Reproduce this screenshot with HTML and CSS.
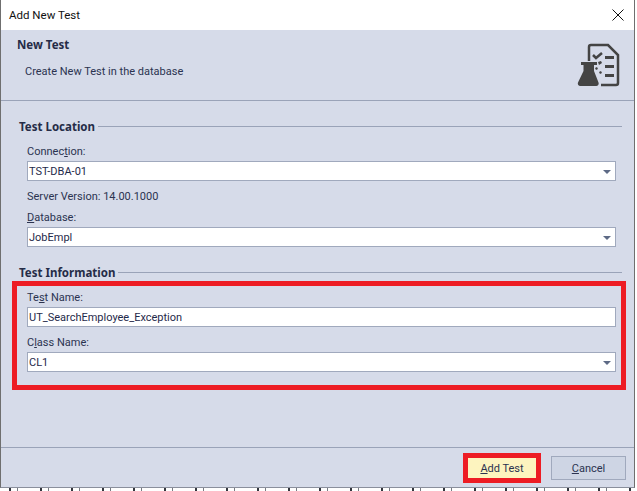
FILE: index.html
```html
<!DOCTYPE html>
<html lang="en">
<head>
<meta charset="utf-8">
<title>Add New Test</title>
<link rel="stylesheet" href="styles.css">
</head>
<body>
<div class="dialog">
  <div class="titlebar">
    <span class="title">Add New Test</span>
    <svg class="close" width="12" height="12" viewBox="0 0 12 12"><path d="M.5.5l11 11M11.500.5l-11 11" stroke="#111" stroke-width="1" fill="none"/></svg>
  </div>
  <div class="banner">
    <div class="banner-text">
      <div class="banner-title">New Test</div>
      <div class="banner-sub">Create New Test in the database</div>
    </div>
    <svg class="banner-icon" width="44" height="44" viewBox="0 0 44 44">
      <path d="M13 18V4a2 2 0 0 1 2-2h17l10 10v28a2 2 0 0 1-2 2H25" fill="none" stroke="#444" stroke-width="2.500"/>
      <path d="M17 12l3 3 6-5" fill="none" stroke="#444" stroke-width="2.500"/>
      <path d="M29 13h9v3h-9zM29 22h9v3h-9zM29 31h9v3h-9z" fill="#444"/>
      <path d="M22 19l3-1 1 2-3 2zM19 25l2-1 1 2-2 1zM23 29l2-1 1 2-2 1z" fill="#444"/>
      <path d="M5 19h16v3h-3v6l4.500 11.500a2.500 2.500 0 0 1-2.500 3.500H4.500a2.500 2.500 0 0 1-2.500-3.500L7.500 28v-6H5z" fill="#444"/>
    </svg>
  </div>
  <div class="content">
    <div class="group-head"><span class="group-title">Test Location</span><span class="rule"></span></div>
    <div class="fields">
      <label class="label">Connec<u>t</u>ion:</label>
      <div class="field"><span>TST-DBA-01</span><i class="arrow"></i></div>
      <div class="label version">Server Version: 14.00.1000</div>
      <label class="label db"><u>D</u>atabase:</label>
      <div class="field"><span>JobEmpl</span><i class="arrow"></i></div>
    </div>
    <div class="group-head second"><span class="group-title">Test Information</span><span class="rule"></span></div>
    <div class="callout">
      <label class="label">Te<u>s</u>t Name:</label>
      <div class="field"><span>UT_SearchEmployee_Exception</span></div>
      <label class="label cls">C<u>l</u>ass Name:</label>
      <div class="field"><span>CL1</span><i class="arrow"></i></div>
    </div>
  </div>
  <div class="footer">
    <div class="button-mark"><button class="btn primary"><u>A</u>dd Test</button></div>
    <button class="btn"><u>C</u>ancel</button>
  </div>
</div>
<div class="desk"></div>
</body>
</html>
```
FILE: styles.css
```css
* { box-sizing: border-box; }
html, body { margin: 0; padding: 0; }
body {
  width: 637px;
  height: 491px;
  overflow: hidden;
  background: #fff;
  font-family: Roboto, "Open Sans", sans-serif;
  font-size: 11px;
  color: #2b3350;
}
.dialog {
  width: 635px;
  height: 488px;
  border-left: 1px solid #6f6f6f;
  border-right: 1px solid #6f6f6f;
  border-bottom: 1px solid #8a8f9c;
  background: #d6dbe9;
  display: flex;
  flex-direction: column;
}
.desk {
  width: 635px;
  height: 3px;
  background: repeating-linear-gradient(90deg, #fff 0 9px, #33363e 9px 11px, #fff 11px 17px, #777a82 17px 18px, #fff 18px 31px);
}
.titlebar {
  height: 30px;
  flex: none;
  background: #fff;
  display: flex;
  align-items: center;
  justify-content: space-between;
  padding: 0 8px 0 8px;
}
.title { font-size: 11.500px; color: #111; }
.close { margin-right: 2px; }
.banner {
  height: 71px;
  flex: none;
  border-bottom: 1px solid #9aa3b8;
  display: flex;
  justify-content: space-between;
  padding: 7px 14px 0 16px;
}
.banner-title, .group-title {
  font-family: "Noto Sans", sans-serif;
  font-size: 11.500px;
  font-weight: 700;
  color: #252c47;
}
.banner-title { line-height: 16px; }
.banner-sub { margin: 11px 0 0 8px; line-height: 16px; }
.banner-icon { margin-top: 6px; }
.content {
  flex: 1;
  padding: 17px 8px 0 18px;
}
.group-head { display: flex; align-items: center; gap: 3px; height: 16px; margin-right: 4px; }
.group-head.second { margin-top: 17px; }
.rule { flex: 1; height: 1px; background: #9aa3b8; }
.fields { padding: 9px 10px 0 8px; }
.label { display: block; padding-top: 1px; line-height: 16px; color: #2b3350; }
.field {
  height: 20px;
  margin-top: 1px;
  background: #fff;
  border: 1px solid #a0a9bd;
  display: flex;
  align-items: center;
  justify-content: space-between;
  padding: 0 4px 0 1px;
  color: #1f2a4a;
}
.arrow {
  width: 0;
  height: 0;
  border-left: 4px solid transparent;
  border-right: 4px solid transparent;
  border-top: 4px solid #5d6a85;
  margin-top: 1px;
}
.version { margin-top: 7px; }
.db { margin-top: 4px; }
.callout {
  margin: 1px 0 0 -7px;
  width: 614px;
  height: 109px;
  border: 5px solid #ed1c24;
  padding: 3px 5px 0 10px;
}
.cls { margin-top: 7px; }
.footer {
  height: 40px;
  flex: none;
  border-top: 1px solid #9aa3b8;
  display: flex;
  justify-content: flex-end;
  align-items: center;
  gap: 10px;
  padding-right: 8px;
}
.btn {
  width: 75px;
  height: 24px;
  font: inherit;
  color: #2b3350;
  background: #ced5e4;
  border: 1px solid #a0a9bd;
  padding: 1px 0 0;
}
.button-mark { border: 5px solid #ed1c24; }
.btn.primary {
  display: block;
  width: 68px;
  height: 20px;
  background: #fdf4bf;
  border: 0;
}
```
